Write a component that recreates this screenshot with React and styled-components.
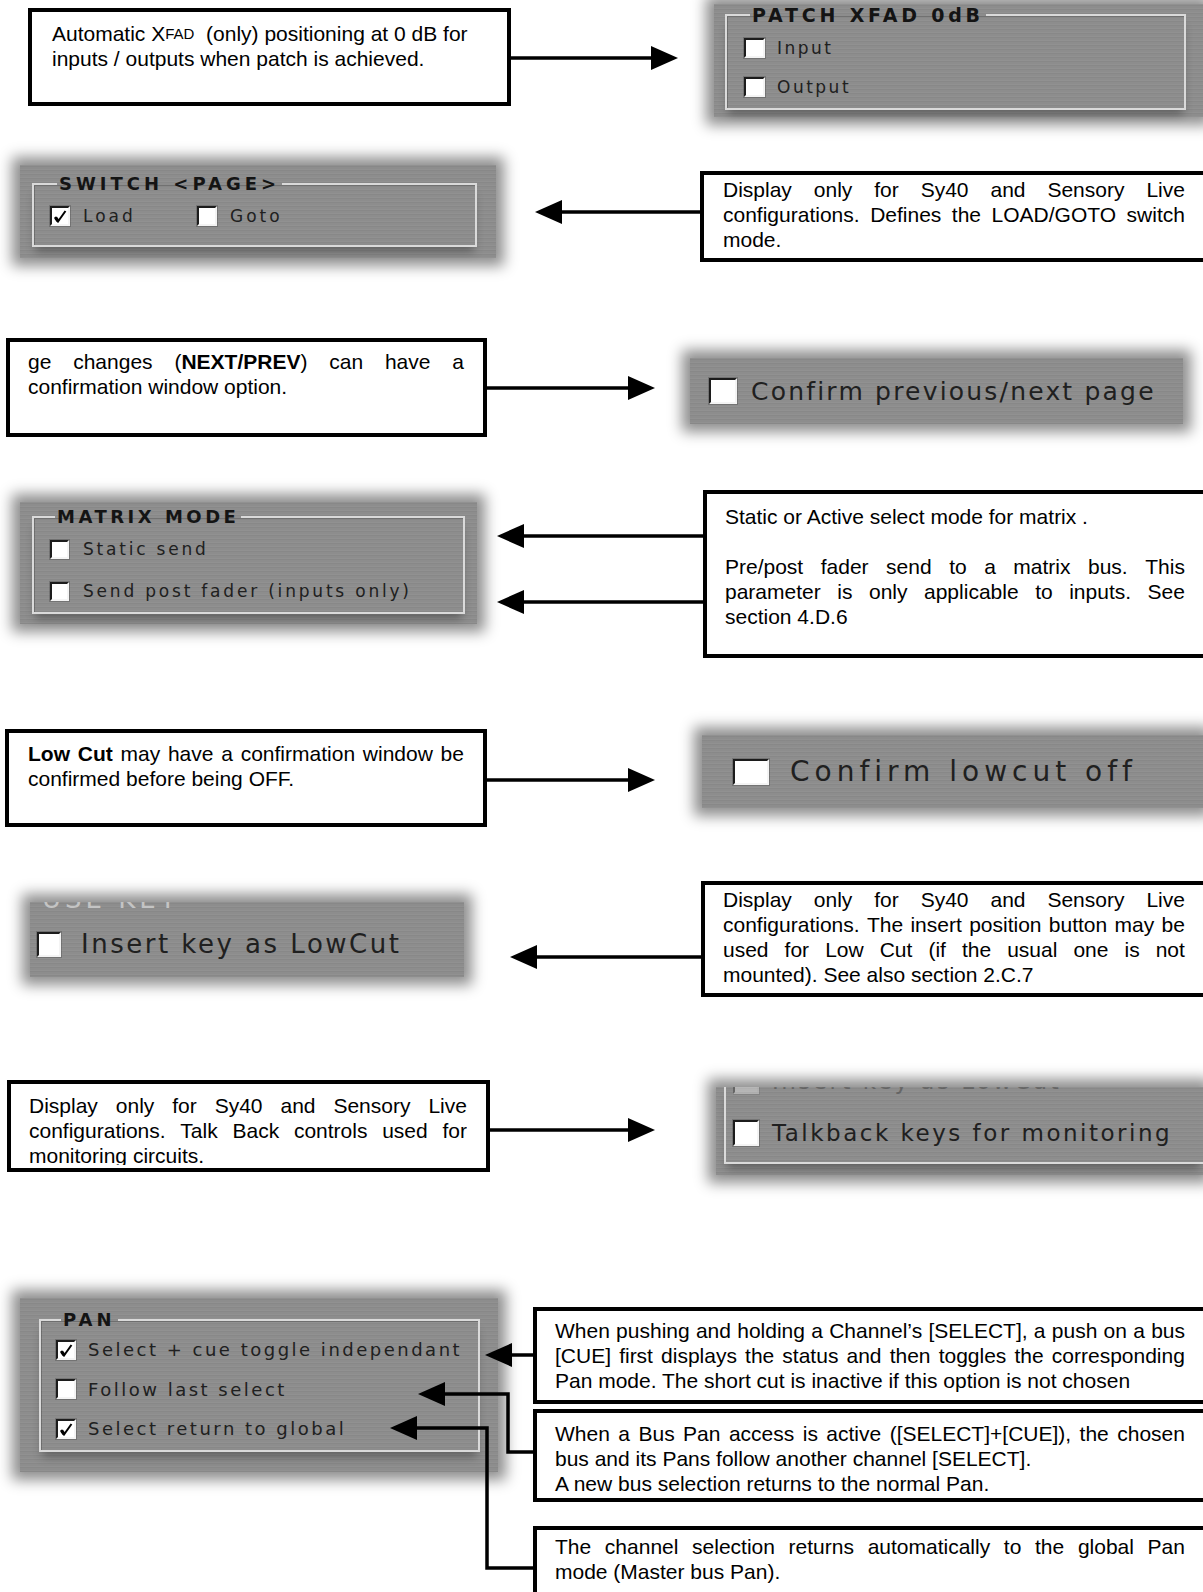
import styled, { createGlobalStyle } from "styled-components";

const GlobalStyle = createGlobalStyle`
  html, body { margin: 0; padding: 0; background: #fff; }
  body { width: 1203px; height: 1592px; overflow: hidden; }
`;

const Page = styled.div`
  width: 1203px;
  height: 1592px;
  overflow: hidden;
  display: flex;
  flex-direction: column;
  font-family: "Liberation Sans", Arial, sans-serif;
  color: #000;
`;

const Section = styled.section`
  position: relative;
  flex: none;
  display: flex;
  align-items: flex-start;
  height: ${(p) => p.$h}px;
`;

// ---- white notes with black frame ----
const Note = styled.div`
  flex: none;
  box-sizing: border-box;
  width: ${(p) => p.$w}px;
  height: ${(p) => p.$h}px;
  margin: ${(p) => p.$mt || 0}px 0 0 ${(p) => p.$ml || 0}px;
  padding: ${(p) => p.$pt}px 0 0 ${(p) => p.$pl}px;
  border: 4px solid #000;
  background: #fff;
  font-size: 21px;
  line-height: 25px;
  overflow: hidden;
`;

const Body = styled.div`
  width: ${(p) => p.$tw}px;
  ${(p) => p.$clip && `height: ${p.$clip}px; overflow: hidden;`}
`;

const Line = styled.div`
  display: flex;
  justify-content: ${(p) => (p.$just ? "space-between" : "flex-start")};
  white-space: pre;
  height: 25px;
`;

const Strong = styled.b`
  font-weight: bold;
`;

const SmallCaps = styled.span`
  font-size: 15px;
`;

function JLine({ words }) {
  const list = typeof words === "string" ? words.split(" ") : words;
  return (
    <Line $just>
      {list.map((w, i) => (
        <span key={i}>{w}</span>
      ))}
    </Line>
  );
}

// ---- arrows ----
const ArrowSvg = styled.svg`
  flex: none;
  display: block;
  margin: ${(p) => p.$mt || 0}px 0 0 ${(p) => p.$ml || 0}px;
`;

function Arrow({ w, dir = "right", mt, ml }) {
  const y = 13;
  const hw = 27;
  const line = dir === "right" ? `M0 ${y} H${w - hw + 2}` : `M${hw - 2} ${y} H${w}`;
  const head =
    dir === "right"
      ? `${w - hw},1 ${w},${y} ${w - hw},25`
      : `${hw},1 0,${y} ${hw},25`;
  return (
    <ArrowSvg width={w} height={26} $mt={mt} $ml={ml}>
      <path d={line} stroke="#000" strokeWidth="3.5" fill="none" />
      <polygon points={head} fill="#000" />
    </ArrowSvg>
  );
}

const ArrowStack = styled.div`
  flex: none;
  display: flex;
  flex-direction: column;
  gap: ${(p) => p.$gap}px;
  margin: ${(p) => p.$mt}px 0 0 ${(p) => p.$ml}px;
`;

const Column = styled.div`
  flex: none;
  display: flex;
  flex-direction: column;
  margin-left: ${(p) => p.$ml}px;
`;

const Wires = styled.svg`
  position: absolute;
  left: 0;
  top: 0;
  pointer-events: none;
`;

// ---- grey console panels ----
const Plate = styled.div`
  flex: none;
  box-sizing: border-box;
  width: ${(p) => p.$w}px;
  height: ${(p) => p.$h}px;
  margin: ${(p) => p.$mt || 0}px 0 0 ${(p) => p.$ml || 0}px;
  background-color: #8d8d8d;
  background-image: repeating-linear-gradient(
    180deg,
    rgba(255, 255, 255, 0.04) 0 1px,
    rgba(0, 0, 0, 0.035) 1px 2px,
    transparent 2px 4px
  );
  box-shadow: 0 0 13px 8px #8f8f8f;
  font-family: "DejaVu Sans", Verdana, sans-serif;
  color: #202020;
  display: flex;
  flex-direction: column;
  justify-content: ${(p) => (p.$center ? "center" : "flex-start")};
  --fs: ${(p) => p.$fs}px;
  --ls: ${(p) => p.$ls}px;
`;

const Group = styled.fieldset`
  box-sizing: border-box;
  min-width: 0;
  margin: ${(p) => p.$y}px 0 0 ${(p) => p.$x}px;
  width: ${(p) => p.$w}px;
  height: ${(p) => p.$h}px;
  padding: 0;
  border: 2px solid #dadada;
  box-shadow: inset 1px 1px 0 rgba(0, 0, 0, 0.22), 0 8px 9px -3px rgba(0, 0, 0, 0.3);
`;

const Title = styled.legend`
  margin-left: ${(p) => p.$ml}px;
  padding: 0 2px;
  font-weight: bold;
  font-size: ${(p) => p.$fs}px;
  letter-spacing: ${(p) => p.$ls}px;
  line-height: 20px;
  color: #141414;
`;

const Rows = styled.div`
  padding: ${(p) => p.$pt || 0}px 0 0 ${(p) => p.$pl || 0}px;
  display: flex;
  flex-direction: ${(p) => (p.$row ? "row" : "column")};
`;

const Option = styled.div`
  flex: none;
  display: flex;
  align-items: center;
  gap: ${(p) => p.$gap}px;
  height: ${(p) => p.$h}px;
  ${(p) => p.$w && `width: ${p.$w}px;`}
  font-size: var(--fs);
  letter-spacing: var(--ls);
  white-space: pre;
  opacity: ${(p) => (p.$faint ? 0.35 : 1)};
`;

const Box = styled.span`
  flex: none;
  box-sizing: border-box;
  width: ${(p) => p.$w}px;
  height: ${(p) => p.$h}px;
  background: #fff;
  border: 2px solid;
  border-color: #1c1c1c #f4f4f4 #f4f4f4 #1c1c1c;
  box-shadow: 0 0 0 1px rgba(70, 70, 70, 0.35);
  display: flex;
  align-items: center;
  justify-content: center;
`;

const Ghost = styled.div`
  flex: none;
  height: ${(p) => p.$h}px;
  overflow: hidden;
  margin-left: ${(p) => p.$ml || 0}px;
  display: flex;
  align-items: flex-end;
`;

const GhostText = styled.div`
  color: #c4c4c4;
  font-size: ${(p) => p.$fs}px;
  letter-spacing: ${(p) => p.$ls}px;
  line-height: ${(p) => p.$lh}px;
  white-space: pre;
`;

const Frame = styled.div`
  box-sizing: border-box;
  margin-left: ${(p) => p.$ml}px;
  height: ${(p) => p.$h}px;
  border-left: 2px solid #dadada;
  border-bottom: 2px solid #dadada;
  box-shadow: 0 8px 9px -3px rgba(0, 0, 0, 0.3);
  display: flex;
  flex-direction: column;
`;

function Check({ w, h, checked }) {
  return (
    <Box $w={w} $h={h}>
      {checked && (
        <svg width={w - 6} height={h - 6} viewBox="0 0 14 14">
          <path d="M2 8 L5 12.5 L12.5 2" stroke="#000" strokeWidth="2" fill="none" />
          <path d="M2.5 8.5 L5 12" stroke="#000" strokeWidth="3.2" fill="none" />
        </svg>
      )}
    </Box>
  );
}

function Opt({ label, checked, bw, bh, gap, h, w, faint }) {
  return (
    <Option $gap={gap} $h={h} $w={w} $faint={faint}>
      <Check w={bw} h={bh} checked={checked} />
      {label}
    </Option>
  );
}

export default function App() {
  return (
    <Page>
      <GlobalStyle />

      {/* 1 - patch xfad */}
      <Section $h={130}>
        <Note $ml={28} $mt={8} $w={483} $h={98} $pt={9} $pl={20}>
          <Body $tw={440}>
            <Line>
              Automatic X<SmallCaps>FAD</SmallCaps>{"  (only) positioning at 0 dB for"}
            </Line>
            <Line>inputs / outputs when patch is achieved.</Line>
          </Body>
        </Note>
        <Arrow w={167} mt={45} />
        <Plate $ml={36} $mt={4} $w={489} $h={113} $fs={17} $ls={2.5}>
          <Group $x={11} $y={1} $w={461} $h={105}>
            <Title $ml={23} $fs={19} $ls={3.8}>
              PATCH XFAD 0dB
            </Title>
            <Rows $pl={17} $pt={3}>
              <Opt label="Input" bw={21} bh={20} gap={12} h={39} />
              <Opt label="Output" bw={21} bh={20} gap={12} h={39} />
            </Rows>
          </Group>
        </Plate>
      </Section>

      {/* 2 - switch page */}
      <Section $h={190}>
        <Plate $ml={20} $mt={35} $w={476} $h={93} $fs={17} $ls={3}>
          <Group $x={12} $y={9} $w={445} $h={73}>
            <Title $ml={23} $fs={18} $ls={4}>
              {"SWITCH <PAGE>"}
            </Title>
            <Rows $row $pl={16} $pt={2}>
              <Opt label="Load" checked bw={20} bh={20} gap={13} h={40} w={147} />
              <Opt label="Goto" bw={20} bh={20} gap={13} h={40} />
            </Rows>
          </Group>
        </Plate>
        <Arrow w={165} dir="left" ml={39} mt={69} />
        <Note $mt={41} $w={510} $h={91} $pt={2} $pl={19}>
          <Body $tw={462}>
            <JLine words="Display only for Sy40 and Sensory Live" />
            <JLine words="configurations. Defines the LOAD/GOTO switch" />
            <Line>mode.</Line>
          </Body>
        </Note>
      </Section>

      {/* 3 - confirm page */}
      <Section $h={150}>
        <Note $ml={6} $mt={18} $w={481} $h={99} $pt={7} $pl={18}>
          <Body $tw={436}>
            <JLine
              words={[
                "ge",
                "changes",
                <>
                  (<Strong>NEXT/PREV</Strong>)
                </>,
                "can",
                "have",
                "a",
              ]}
            />
            <Line>confirmation window option.</Line>
          </Body>
        </Note>
        <Arrow w={168} mt={55} />
        <Plate $ml={35} $mt={38} $w={493} $h={66} $fs={25} $ls={2.2} $center>
          <Rows $pl={19}>
            <Opt label="Confirm previous/next page" bw={28} bh={26} gap={14} h={30} />
          </Rows>
        </Plate>
      </Section>

      {/* 4 - matrix mode */}
      <Section $h={230}>
        <Plate $ml={20} $mt={32} $w={457} $h={122} $fs={17} $ls={2.8}>
          <Group $x={12} $y={5} $w={433} $h={107}>
            <Title $ml={21} $fs={18} $ls={3.5}>
              MATRIX MODE
            </Title>
            <Rows $pl={16} $pt={1}>
              <Opt label="Static send" bw={19} bh={19} gap={14} h={42} />
              <Opt label="Send post fader (inputs only)" bw={19} bh={19} gap={14} h={42} />
            </Rows>
          </Group>
        </Plate>
        <ArrowStack $ml={20} $mt={53} $gap={40}>
          <Arrow w={206} dir="left" />
          <Arrow w={206} dir="left" />
        </ArrowStack>
        <Note $mt={20} $w={510} $h={168} $pt={10} $pl={18}>
          <Body $tw={460}>
            <Line>Static or Active select mode for matrix .</Line>
            <Line />
            <JLine words="Pre/post fader send to a matrix bus. This" />
            <JLine words="parameter is only applicable to inputs. See" />
            <Line>section 4.D.6</Line>
          </Body>
        </Note>
      </Section>

      {/* 5 - low cut */}
      <Section $h={160}>
        <Note $ml={5} $mt={29} $w={482} $h={98} $pt={8} $pl={19}>
          <Body $tw={436}>
            <JLine
              words={[
                <Strong>Low</Strong>,
                <Strong>Cut</Strong>,
                "may",
                "have",
                "a",
                "confirmation",
                "window",
                "be",
              ]}
            />
            <Line>confirmed before being OFF.</Line>
          </Body>
        </Note>
        <Arrow w={168} mt={67} />
        <Plate $ml={47} $mt={35} $w={501} $h={73} $fs={28} $ls={5} $center>
          <Rows $pl={31}>
            <Opt label="Confirm lowcut off" bw={36} bh={26} gap={21} h={30} />
          </Rows>
        </Plate>
      </Section>

      {/* 6 - insert key */}
      <Section $h={200}>
        <Plate $ml={30} $mt={42} $w={434} $h={75} $fs={26} $ls={2.5}>
          <Ghost $h={8} $ml={12}>
            <GhostText $fs={26} $ls={4} $lh={22}>
              USE KEY
            </GhostText>
          </Ghost>
          <Rows $pl={7} $pt={19}>
            <Opt label="Insert key as LowCut" bw={24} bh={25} gap={20} h={30} />
          </Rows>
        </Plate>
        <Arrow w={191} dir="left" ml={46} mt={84} />
        <Note $mt={21} $w={510} $h={116} $pt={2} $pl={18}>
          <Body $tw={462}>
            <JLine words="Display only for Sy40 and Sensory Live" />
            <JLine words="configurations. The insert position button may be" />
            <JLine words="used for Low Cut (if the usual one is not" />
            <Line>mounted). See also section 2.C.7</Line>
          </Body>
        </Note>
      </Section>

      {/* 7 - talkback */}
      <Section $h={210}>
        <Note $ml={7} $mt={20} $w={483} $h={92} $pt={9} $pl={18}>
          <Body $tw={438} $clip={72}>
            <JLine words="Display only for Sy40 and Sensory Live" />
            <JLine words="configurations. Talk Back controls used for" />
            <Line>monitoring circuits.</Line>
          </Body>
        </Note>
        <Arrow w={165} mt={57} />
        <Plate $ml={61} $mt={27} $w={487} $h={88} $fs={23} $ls={2.5}>
          <Frame $ml={8} $h={77}>
            <Ghost $h={9} $ml={7}>
              <Opt label="Insert key as LowCut" faint bw={26} bh={26} gap={13} h={30} />
            </Ghost>
            <Rows $pl={7} $pt={22}>
              <Opt label="Talkback keys for monitoring" bw={26} bh={26} gap={13} h={30} />
            </Rows>
          </Frame>
        </Plate>
      </Section>

      {/* 8 - pan */}
      <Section $h={322}>
        <Plate $ml={20} $mt={28} $w={478} $h={174} $fs={18} $ls={2.5}>
          <Group $x={19} $y={12} $w={441} $h={142}>
            <Title $ml={20} $fs={18} $ls={4}>
              PAN
            </Title>
            <Rows $pl={15}>
              <Opt label="Select + cue toggle independant" checked bw={20} bh={20} gap={12} h={39.5} />
              <Opt label="Follow last select" bw={20} bh={20} gap={12} h={39.5} />
              <Opt label="Select return to global" checked bw={20} bh={20} gap={12} h={39.5} />
            </Rows>
          </Group>
        </Plate>
        <Column $ml={35}>
          <Note $mt={37} $w={680} $h={97} $pt={7} $pl={18}>
            <Body $tw={630}>
              <JLine words="When pushing and holding a Channel’s [SELECT], a push on a bus" />
              <JLine words="[CUE] first displays the status and then toggles the corresponding" />
              <Line>Pan mode. The short cut is inactive if this option is not chosen</Line>
            </Body>
          </Note>
          <Note $mt={5} $w={680} $h={93} $pt={8} $pl={18}>
            <Body $tw={630}>
              <JLine words="When a Bus Pan access is active ([SELECT]+[CUE]), the chosen" />
              <Line>bus and its Pans follow another channel [SELECT].</Line>
              <Line>A new bus selection returns to the normal Pan.</Line>
            </Body>
          </Note>
          <Note $mt={24} $w={680} $h={100} $pt={4} $pl={18}>
            <Body $tw={630}>
              <JLine words="The channel selection returns automatically to the global Pan" />
              <Line>mode (Master bus Pan).</Line>
            </Body>
          </Note>
        </Column>
        <Wires width={1203} height={322}>
          <g stroke="#000" strokeWidth="3.5" fill="none">
            <path d="M508 85 H535" />
            <path d="M441 124 H508 V182 H535" />
            <path d="M413 158 H487 V298 H535" />
          </g>
          <g fill="#000">
            <polygon points="512,73 485,85 512,97" />
            <polygon points="445,112 418,124 445,136" />
            <polygon points="417,146 390,158 417,170" />
          </g>
        </Wires>
      </Section>
    </Page>
  );
}
